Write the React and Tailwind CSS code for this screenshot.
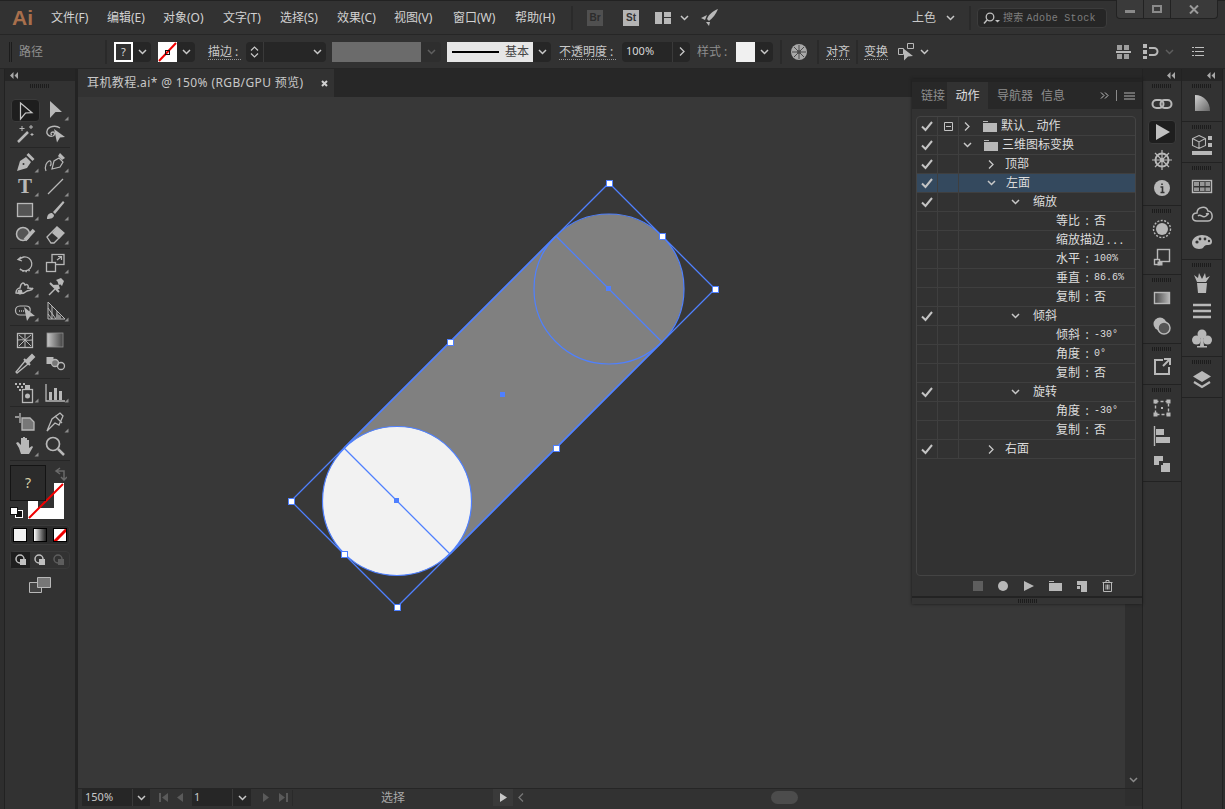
import React from 'react';

const MENU = [
  ['文件(F)', 'w-[56px]'],
  ['编辑(E)', 'w-[56px]'],
  ['对象(O)', 'w-[60px]'],
  ['文字(T)', 'w-[57px]'],
  ['选择(S)', 'w-[57px]'],
  ['效果(C)', 'w-[57px]'],
  ['视图(V)', 'w-[59px]'],
  ['窗口(W)', 'w-[62px]'],
  ['帮助(H)', 'w-[56px]'],
];

const Chev = ({ className = 'text-[#c8c8c8]' }) => (
  <svg width="9" height="6" viewBox="0 0 9 6" className={`shrink-0 ${className}`}>
    <path d="M1 1l3.5 3.5L8 1" fill="none" stroke="currentColor" strokeWidth="1.5" />
  </svg>
);

const ChevRight = ({ className = 'text-[#c8c8c8]' }) => (
  <svg width="6" height="9" viewBox="0 0 6 9" className={`shrink-0 ${className}`}>
    <path d="M1 .5L5 4.5 1 8.5" fill="none" stroke="currentColor" strokeWidth="1.3" />
  </svg>
);

const Drop = ({ w = 'w-[18px]', dim }) => (
  <div className={`${w} h-[20px] shrink-0 flex items-center justify-center bg-[#262626] rounded-r-sm ${dim ? 'opacity-30' : ''}`}>
    <Chev />
  </div>
);

const Sep = ({ className = '' }) => <div className={`w-[2px] h-[24px] shrink-0 bg-[#2a2a2a] ${className}`} />;

const Label = ({ children, className = '', dim }) => (
  <div className={`shrink-0 whitespace-nowrap text-xs leading-[15px] border-b border-dotted border-[#999] ${dim ? 'text-[#9a9a9a]' : 'text-[#c8c8c8]'} ${className}`}>
    {children}
  </div>
);

const Grip = ({ className = 'w-[28px]' }) => (
  <div className={`h-[4px] bg-[repeating-linear-gradient(90deg,#1c1c1c_0,#1c1c1c_1px,transparent_1px,transparent_2px)] ${className}`} />
);

const Collapse = () => (
  <svg width="8" height="7" viewBox="0 0 8 7" className="text-[#a8a8a8]">
    <path d="M3.500 0L0 3.500 3.500 7zM8 0L4.500 3.500 8 7z" fill="currentColor" />
  </svg>
);

// one cell of the tool panel, the flyout triangle sits in the svg
const Tool = ({ children, tri = true }) => (
  <div className="w-[30px] h-[24px] flex items-center justify-center">
    <svg width="24" height="24" viewBox="0 0 24 24" fill="none" stroke="#b8b8b8" strokeWidth="1.3" className="overflow-visible">
      {children}
      {tri && <path d="M25.5 22.5h-4l4-4z" fill="#8c8c8c" stroke="none" />}
    </svg>
  </div>
);

const ToolRow = ({ children }) => <div className="flex pl-[5px] h-[24px]">{children}</div>;
const ToolSep = ({ className = '' }) => <div className={`h-px bg-[#262626] mx-[5px] ${className}`} />;

const DockIcon = ({ children, active }) => (
  <div className="h-[28px] flex items-center justify-center">
    <div className={`w-[28px] h-[24px] flex items-center justify-center rounded-sm ${active ? 'bg-[#1e1e1e] border border-[#3a3a3a]' : ''}`}>
      <svg width="24" height="24" viewBox="0 0 24 24" fill="none" stroke="#b8b8b8" strokeWidth="1.4">{children}</svg>
    </div>
  </div>
);

const DockGroup = ({ children }) => (
  <div className="border-b border-[#222] pb-[3px]">
    <div className="h-[9px] pt-[3px] flex justify-center"><Grip className="w-[20px]" /></div>
    {children}
  </div>
);

const LEFT_DOCK = [
  [
    [<g key="a"><rect x="2.500" y="8" width="11" height="8" rx="4" strokeWidth="2" /><rect x="10.500" y="8" width="11" height="8" rx="4" strokeWidth="2" /></g>],
    [<path key="a" d="M6 4l14 8-14 8z" fill="#c0c0c0" stroke="none" />, true],
    [<g key="a"><circle cx="12" cy="12" r="6.5" strokeWidth="2" /><circle cx="12" cy="12" r="1.5" fill="#b8b8b8" /><path d="M12 2v20M2 12h20M5 5l14 14M19 5L5 19" strokeWidth="1.2" /></g>],
    [<g key="a"><circle cx="12" cy="12" r="8" fill="#b8b8b8" stroke="none" /><path d="M12 7.500v1.600M10.500 11H12.500V16M10.500 16.500h4" stroke="#323232" strokeWidth="1.6" /></g>],
  ],
  [
    [<g key="a"><circle cx="12" cy="12" r="6" fill="#b8b8b8" stroke="none" /><circle cx="12" cy="12" r="8.5" strokeDasharray="2 1.5" /></g>],
    [<g key="a"><rect x="7.500" y="4.500" width="12" height="12" /><rect x="4.500" y="14.500" width="5" height="5" fill="#323232" /><rect x="7.500" y="16.500" width="5" height="4" fill="#b8b8b8" stroke="none" /></g>],
  ],
  [
    [<g key="a"><defs><linearGradient id="dg" x1="0" x2="1"><stop offset="0" stopColor="#444" /><stop offset="1" stopColor="#b8b8b8" /></linearGradient></defs><rect x="4.500" y="6.500" width="15" height="11" fill="url(#dg)" /></g>],
    [<g key="a"><circle cx="10" cy="10" r="6.5" fill="#b8b8b8" stroke="none" /><circle cx="14" cy="14" r="6" fill="#555" stroke="#b8b8b8" strokeWidth="1.5" /></g>],
  ],
  [
    [<path key="a" d="M13 5H5v14h14v-7M14 4h6v6M20 4l-7 7" strokeWidth="2" />],
  ],
  [
    [<g key="a"><rect x="5.500" y="5.500" width="13" height="13" strokeDasharray="3 2" /><path d="M3.500 3.500h4v4h-4zM16.500 3.500h4v4h-4zM3.500 16.500h4v4h-4zM16.500 16.500h4v4h-4z" fill="#b8b8b8" stroke="none" /><rect x="11" y="11" width="2" height="2" fill="#b8b8b8" stroke="none" /></g>],
    [<g key="a"><path d="M4.500 2v20" /><path d="M6 5h8v6H6zM6 13h14v6H6z" fill="#b8b8b8" stroke="none" /></g>],
    [<g key="a"><path d="M4 4h9v5H9v4H4zM11 11h9v9h-9z" fill="#b8b8b8" stroke="none" /><rect x="9" y="9" width="4" height="4" fill="#323232" stroke="none" /></g>],
  ],
];

const RIGHT_DOCK = [
  [
    [<g key="a"><defs><linearGradient id="cg" x1="0" x2="1" y2="1"><stop offset="0" stopColor="#d0d0d0" /><stop offset="1" stopColor="#666" /></linearGradient></defs><path d="M5 3c9 0 15 7 15 16H5z" fill="url(#cg)" stroke="none" /></g>],
  ],
  [
    [<g key="a"><path d="M9 2.500l6.500 3v7l-6.500 3-6.500-3v-7zM2.500 5.500L9 9l6.500-3.500M9 9v6.500" strokeWidth="1.1" /><path d="M18 3h4v4h-4zM18 10h4v4h-4zM2 18h20v4H2z" fill="#b8b8b8" stroke="none" /></g>],
  ],
  [
    [<g key="a"><rect x="2.500" y="6.500" width="19" height="12" /><path d="M4 8h5v4H4zM10 8h4.500v4H10zM15.500 8H20v4h-4.500zM4 13.500h5V17H4zM10 13.500h4.500V17H10zM15.500 13.500H20V17h-4.500z" fill="#b8b8b8" stroke="none" opacity=".75" /></g>],
    [<path key="a" d="M7 19c-6 0-6-8 0-8 0-6 9-8 11-2 5 0 6 10 0 10zM8 14c3-3 4 3 8 0s2-3 0-2" strokeWidth="1.5" />],
    [<g key="a"><path d="M12 5c-6 0-10 4-10 8 0 3 3 6 7 6 6 0 4-4 8-4s5-1 5-4c0-3-5-6-10-6z" fill="#b8b8b8" stroke="none" /><circle cx="7" cy="12" r="1.6" fill="#323232" stroke="none" /><circle cx="10" cy="9" r="1.4" fill="#323232" stroke="none" /><circle cx="15" cy="9" r="1.4" fill="#323232" stroke="none" /><circle cx="19" cy="11" r="1.2" fill="#323232" stroke="none" /></g>],
  ],
  [
    [<path key="a" d="M7 12h10l-1 10H8zM7 11L4 4l4 3 1-5 3 6 3-6 1 5 4-2-4 6z" fill="#b8b8b8" stroke="none" />],
    [<path key="a" d="M3 6h18M3 12h18M3 18h18" strokeWidth="2.5" />],
    [<g key="a"><circle cx="12" cy="7" r="4.500" fill="#b8b8b8" stroke="none" /><circle cx="6.500" cy="13" r="4.500" fill="#b8b8b8" stroke="none" /><circle cx="17.500" cy="13" r="4.500" fill="#b8b8b8" stroke="none" /><path d="M11 10h2l1 9h3v1.500H7V19h3z" fill="#b8b8b8" stroke="none" /></g>],
  ],
  [
    [<g key="a"><path d="M12 3l9 5.500-9 5.500-9-5.500z" fill="#b8b8b8" stroke="none" /><path d="M4 14l8 5 8-5" strokeWidth="2.2" /></g>],
  ],
];

// name, level, flags for the actions list
const ROWS = [
  { t: '默认 _ 动作', lvl: 0, check: true, box: true, closed: true },
  { t: '三维图标变换', lvl: 0, check: true },
  { t: '顶部', lvl: 1, check: true, closed: true },
  { t: '左面', lvl: 1, check: true, hl: true },
  { t: '缩放', lvl: 2, check: true },
  { t: '等比', v: '否', lvl: 3 },
  { t: '缩放描边 . . .', lvl: 3 },
  { t: '水平', v: '100%', lvl: 3 },
  { t: '垂直', v: '86.6%', lvl: 3 },
  { t: '复制', v: '否', lvl: 3 },
  { t: '倾斜', lvl: 2, check: true },
  { t: '倾斜', v: '-30°', lvl: 3 },
  { t: '角度', v: '0°', lvl: 3 },
  { t: '复制', v: '否', lvl: 3 },
  { t: '旋转', lvl: 2, check: true },
  { t: '角度', v: '-30°', lvl: 3 },
  { t: '复制', v: '否', lvl: 3 },
  { t: '右面', lvl: 1, check: true, closed: true },
];

const INDENT = ['pl-[4px]', 'pl-[28px]', 'pl-[52px]', 'pl-[97px]'];

const Folder = () => (
  <svg width="14" height="11" viewBox="0 0 14 11" className="shrink-0 ml-[12px] mr-[4px]">
    <path d="M0 0h5v1H0zM0 2h14v9H0z" fill="#b8b8b8" />
  </svg>
);

const ActionRow = ({ row }) => {
  const open = row.closed ? <ChevRight className="text-[#c8c8c8] mx-[1px]" /> : <Chev />;
  return (
    <div className={`h-[19px] flex border-b border-[#3f3f3f] ${row.hl ? 'bg-[#34495e]' : ''}`}>
      <div className="w-[21px] flex items-center justify-center border-r border-[#3f3f3f]">
        {row.check && (
          <svg width="12" height="11" viewBox="0 0 12 11"><path d="M1 5.500l3.500 3.500L11 1" fill="none" stroke="#c4c4c4" strokeWidth="2" /></svg>
        )}
      </div>
      <div className="w-[21px] flex items-center justify-center border-r border-[#3f3f3f]">
        {row.box && (
          <svg width="9" height="9" viewBox="0 0 9 9"><path d="M.5.500h8v8h-8zM2 4.500h5" fill="none" stroke="#c4c4c4" /></svg>
        )}
      </div>
      <div className={`flex-1 flex items-center text-xs text-[#dcdcdc] whitespace-nowrap ${INDENT[row.lvl]}`}>
        {row.lvl < 3 && open}
        {row.lvl === 0 && <Folder />}
        {row.lvl === 1 && <span className="w-[10px]" />}
        {row.lvl === 2 && <span className="w-[13px]" />}
        <span>{row.t}</span>
        {row.v && (
          <>
            <span className="w-[14px] text-center">:</span>
            <span className={row.v === '否' ? 'text-xs' : "font-['Liberation_Mono','Noto_Sans_CJK_SC',monospace] text-[10px]"}>{row.v}</span>
          </>
        )}
      </div>
    </div>
  );
};

const ActionsPanel = () => (
  <div className="absolute left-[912px] top-[79px] w-[230px] h-[525px] bg-[#323232] border-t-[3px] border-[#232323] flex flex-col shadow-[0_0_3px_#1a1a1a]">
    <div className="h-[27px] bg-[#282828] flex items-stretch text-xs shrink-0">
      <div className="w-[33px] flex items-center justify-end text-[#8e8e8e]">链接</div>
      <div className="ml-[2px] w-[41px] bg-[#323232] flex items-center justify-center text-[#e0e0e0]">动作</div>
      <div className="ml-[9px] w-[36px] flex items-center text-[#8e8e8e] whitespace-nowrap">导航器</div>
      <div className="ml-[8px] w-[26px] flex items-center text-[#8e8e8e]">信息</div>
      <div className="ml-auto flex items-center pr-[7px]">
        <svg width="9" height="7" viewBox="0 0 9 7" className="mr-[7px]"><path d="M1 .5L4 3.500 1 6.500M5 .5L8 3.500 5 6.500" fill="none" stroke="#c0c0c0" /></svg>
        <div className="w-px h-[11px] bg-[#8a8a8a] mr-[7px]" />
        <svg width="11" height="8" viewBox="0 0 11 8"><path d="M0 1h11M0 4h11M0 7h11" stroke="#b0b0b0" /></svg>
      </div>
    </div>
    <div className="mt-[7px] ml-[4px] mr-[6px] h-[460px] border border-[#444] rounded-sm shrink-0">
      {ROWS.map((row, i) => <ActionRow key={i} row={row} />)}
    </div>
    <div className="h-[20px] flex items-center text-[#b8b8b8] pl-[61px] shrink-0">
      <svg width="10" height="10" className="mr-[15px]"><rect width="10" height="10" fill="#5e5e5e" /></svg>
      <svg width="10" height="10" className="mr-[16px]"><circle cx="5" cy="5" r="5" fill="#b8b8b8" /></svg>
      <svg width="10" height="10" className="mr-[15px]"><path d="M0 0l10 5-10 5z" fill="#b8b8b8" /></svg>
      <svg width="13" height="10" className="mr-[14px]"><path d="M0 0h5v1H0zM0 2h13v8H0z" fill="#b8b8b8" /></svg>
      <svg width="11" height="11" className="mr-[15px]"><path d="M1 0h10v11H5V8H1zM1 4v1h3v3h1V4z" fill="#b8b8b8" /></svg>
      <svg width="11" height="12"><path d="M.5 2.500h10M4 2V.5h3V2M1.500 3v8.500h8V3M4 4.500v5M5.500 4.500v5M7 4.500v5" fill="none" stroke="#b8b8b8" /></svg>
    </div>
    <div className="mt-auto h-[8px] border-t-2 border-[#232323] flex justify-center items-center bg-[#343434]">
      <Grip className="w-[19px]" />
    </div>
  </div>
);

const Handle = ({ x, y }) => (
  <rect x={x - 3} y={y - 3} width="6" height="6" fill="#fff" stroke="#4f80ff" strokeWidth="1" shapeRendering="crispEdges" />
);

const Canvas = () => (
  <svg viewBox="78 97 1047 691" className="flex-1 h-full block min-w-0">
    <path d="M556 236L344 448l106 106 212-212z" fill="#808080" />
    <circle cx="609" cy="289" r="75" fill="#808080" stroke="#4f80ff" strokeWidth="1.2" />
    <circle cx="397" cy="501" r="74.500" fill="#f2f2f2" stroke="#4f80ff" strokeWidth="1.200" />
    <path d="M556 236L344 448M662 342L450 554" fill="none" stroke="#4f80ff" strokeWidth="1.500" />
    <path d="M556 236l106 106M344 448l106 106" fill="none" stroke="#4f80ff" strokeWidth="1.300" />
    <path d="M609 183l106 106-318 318-106-106z" fill="none" stroke="#4f80ff" strokeWidth="1.300" />
    {[[609, 183], [662, 236], [715, 289], [556, 448], [397, 607], [344, 554], [291, 501], [450, 342]].map(([x, y]) => (
      <Handle key={`${x}-${y}`} x={x} y={y} />
    ))}
    {[[608, 288], [396, 500], [502, 394]].map(([x, y]) => (
      <rect key={x} x={x - 2} y={y - 2} width="5" height="5" fill="#4f80ff" shapeRendering="crispEdges" />
    ))}
  </svg>
);

const Toolbar = () => (
  <div className="w-[70px] shrink-0 bg-[#323232] flex flex-col">
    <div className="h-[12px] bg-[#262626] flex items-center pl-[5px]"><Collapse /></div>
    <div className="h-[17px] flex justify-center pt-[3px]"><Grip className="w-[20px]" /></div>

    <ToolRow>
      <div className="w-[30px] h-[24px] flex items-center justify-center pt-px">
        <div className="w-[29px] h-[23px] bg-[#1e1e1e] border border-[#3a3a3a] rounded-sm flex items-center justify-center">
          <svg width="24" height="24" viewBox="0 0 24 24"><path d="M7.500 4l11.500 9.700-6.500.3-5 6z" fill="none" stroke="#c8c8c8" strokeWidth="1.200" /></svg>
        </div>
      </div>
      <Tool><path d="M7 3l12 11h-6.500L7 20z" fill="#b8b8b8" stroke="none" /></Tool>
    </ToolRow>
    <ToolRow>
      <Tool tri={false}><path d="M5 20L15 10" strokeWidth="2.500" /><path d="M9 4v5M6.500 6.500h5M18 3v4M16 5h4M19 11v3M17.500 12.500h3" strokeWidth="1" /></Tool>
      <Tool tri={false}><path d="M17 6C13 3 5 4 4 9c-1 4 3 6 6 5 2-1 2-4 0-4s-3 2-1 3" /><path d="M11 7l11 8-5 .5-3 5z" fill="#b8b8b8" stroke="none" /></Tool>
    </ToolRow>
    <ToolSep className="mt-px mb-[2px]" />

    <ToolRow>
      <Tool><path d="M4 21l3-10 6-4 5 5-4 6z" fill="#b8b8b8" stroke="none" /><path d="M13.500 5l2-2 6 6-2 2z" fill="#b8b8b8" stroke="none" /><circle cx="10.500" cy="14" r="1" fill="#323232" stroke="none" /></Tool>
      <Tool><path d="M3 21c-2-5 1-9 3-10s3 3 1 5M9 19l2-8 5-3 4 4-3 5z" strokeWidth="1.200" /><path d="M15 6l2-3 5 5-3 2z" fill="#b8b8b8" stroke="none" /></Tool>
    </ToolRow>
    <ToolRow>
      <Tool><text x="12" y="19" textAnchor="middle" fontFamily="Liberation Serif" fontWeight="700" fontSize="21" fill="#b8b8b8" stroke="none">T</text></Tool>
      <Tool><path d="M5 20L20 5" /></Tool>
    </ToolRow>
    <ToolRow>
      <Tool><rect x="4.500" y="5.500" width="15" height="13" fill="#555" /></Tool>
      <Tool><path d="M4 21c0-4 2-6 5-6l2 2c0 3-3 4-7 4zM10 14L20 3l1.500 1.500L12 16z" fill="#b8b8b8" stroke="none" /></Tool>
    </ToolRow>
    <ToolRow>
      <Tool><circle cx="10" cy="12" r="6.500" fill="#555" strokeWidth="1.500" /><path d="M12 18L21 8" stroke="#b8b8b8" strokeWidth="3.500" /></Tool>
      <Tool><path d="M4 15L14 5l7 6-10 10H8z" fill="#323232" /><path d="M9 11l5-6 7 6-5 6z" fill="#b8b8b8" stroke="none" /></Tool>
    </ToolRow>
    <ToolSep className="my-[2px]" />

    <ToolRow>
      <Tool><path d="M8 6l-3 2.500L9 10" /><path d="M6 9a7 7 0 1 1 1 9" /><path d="M7 18a7 7 0 0 0 10 1" strokeDasharray="1.500 1.500" /></Tool>
      <Tool><rect x="9" y="3.500" width="12" height="10" /><rect x="3.500" y="11.500" width="9" height="9" fill="#323232" /><path d="M14 9l4-3M15 5.500h3.500V9" strokeWidth="1.200" /></Tool>
    </ToolRow>
    <ToolRow>
      <Tool><path d="M3 18c0-3 2-5 4-5 1-6 4-6 5-3 2-1 4 0 3 3 2 0 4 1 5 0-1 3-4 2-6 3-2 2-6 3-11 2z" strokeWidth="1.500" /><circle cx="7" cy="17" r="1.800" fill="#b8b8b8" /></Tool>
      <Tool><path d="M6 20l6-6" strokeWidth="1.500" /><path d="M9 10l5 5 3-1.500L14.500 6.500 13 5l5-2 3 3-2 5-1.500-1.500z" fill="#b8b8b8" stroke="none" /><path d="M7 8l9 9" strokeWidth="2" /></Tool>
    </ToolRow>
    <ToolRow>
      <Tool><path d="M15 16H7c-6 0-6-9 0-9h6c5 0 5 5 3 7" strokeWidth="1.200" /><path d="M6 12h6" strokeDasharray="1 1" /><path d="M11 8l11 9-5 .5-3 4.500z" fill="#b8b8b8" stroke="none" /></Tool>
      <Tool><path d="M5 3v17h17L5 3zM5 9l8 11M5 15l4 5M9 7v13M14 12v8" strokeWidth="1" /><path d="M13 14l5 3v3h-5z" fill="#8a8a8a" stroke="none" /></Tool>
    </ToolRow>
    <ToolSep className="mt-[2px] mb-[2px]" />

    <ToolRow>
      <Tool tri={false}><rect x="4.500" y="5.500" width="15" height="14" /><path d="M12 5v14M5 12c4-1 9 1 14 0M6 7l6 5 6-5M6 18l6-6 6 6" strokeWidth="1" /></Tool>
      <Tool tri={false}><defs><linearGradient id="tg" x1="0" x2="1"><stop offset="0" stopColor="#c8c8c8" /><stop offset="1" stopColor="#444" /></linearGradient></defs><rect x="4" y="5" width="16" height="14" fill="url(#tg)" stroke="#909090" strokeWidth=".8" /></Tool>
    </ToolRow>
    <ToolRow>
      <Tool><path d="M4 21l-1-1 9-11 3 3z" fill="#323232" /><path d="M11 7l6 6M13 9l6-6 2 2-6 6" fill="#b8b8b8" strokeWidth="2" /></Tool>
      <Tool tri={false}><rect x="3.500" y="5" width="7" height="7" fill="#b8b8b8" stroke="none" /><circle cx="12" cy="11" r="3.500" fill="#777" /><circle cx="18" cy="14" r="3.500" /></Tool>
    </ToolRow>
    <ToolSep className="mt-[2px] mb-px" />

    <ToolRow>
      <Tool><path d="M2 4h2M6 4h2M10 4h2M4 7h2M8 7h2M6 10h2" strokeWidth="2" /><rect x="9.500" y="9.500" width="10" height="13" /><circle cx="14.500" cy="16" r="2.500" fill="#b8b8b8" stroke="none" /><rect x="12" y="5" width="5" height="4" fill="#b8b8b8" stroke="none" /></Tool>
      <Tool><path d="M3 4v17h19" /><path d="M6 12h3v8H6zM11 8h3v12h-3zM16 11h3v9h-3z" fill="#b8b8b8" stroke="none" /></Tool>
    </ToolRow>
    <ToolSep className="mt-[2px] mb-[3px]" />

    <ToolRow>
      <Tool tri={false}><path d="M7 3v10M2 7h4" /><path d="M9 8h8l4 4v8H9z" fill="#777" stroke="#b8b8b8" /></Tool>
      <Tool><path d="M4 21l5-12 8-6 3 3-4 9-4-2z" strokeWidth="1.300" /><path d="M12 6l7 7" /></Tool>
    </ToolRow>
    <ToolRow>
      <Tool><path d="M6 14L3 9l2-1 3 3V4h2v6-7h2v7-6h2v6-4h2v8l3-2 1 1-4 7H8z" fill="#b8b8b8" stroke="none" /></Tool>
      <Tool tri={false}><circle cx="10" cy="10" r="6.500" strokeWidth="1.700" /><path d="M15 15l6 6" strokeWidth="2.500" /></Tool>
    </ToolRow>
    <ToolSep className="mt-[2px]" />

    {/* fill and stroke swatches overlap */}
    <div className="relative h-[64px]">
      <div className="absolute left-[5px] top-[4px] w-[36px] h-[36px] bg-[#2b2b2b] border border-[#141414] z-10 flex items-center justify-center text-sm text-[#d8cfa8]">?</div>
      <div className="absolute left-[23px] top-[22px] w-[36px] h-[36px] bg-white">
        <div className="absolute left-[10px] top-0 w-[16px] h-[25px] bg-[#323232]" />
        <svg width="36" height="36" className="absolute inset-0"><path d="M1 35L35 1" stroke="#f00000" strokeWidth="2" /></svg>
      </div>
      <svg width="14" height="14" viewBox="0 0 14 14" className="absolute left-[48px] top-[6px]">
        <path d="M7 1L3 4l4 3M3 4h8v8M8 10l3 3 3-3" fill="none" stroke="#6a6a6a" strokeWidth="1.500" />
      </svg>
      <div className="absolute left-[10px] top-[49px] w-[8px] h-[8px] bg-[#111] border border-white z-10" />
      <div className="absolute left-[5px] top-[46px] w-[8px] h-[8px] bg-white border border-[#111] z-10" />
    </div>

    <div className="mx-[5px] h-[20px] flex gap-[2px] bg-[#2b2b2b] border border-[#3a3a3a] rounded-sm items-center justify-around">
      <div className="w-[14px] h-[14px] bg-[#f2f2f2] border border-black" />
      <div className="w-[14px] h-[14px] bg-linear-to-r from-white to-[#222] border border-black" />
      <div className="w-[14px] h-[14px] bg-white border border-black overflow-hidden">
        <svg width="14" height="14"><path d="M0 13L13 0" stroke="#f00000" strokeWidth="3" /></svg>
      </div>
    </div>
    <div className="mx-[5px] mt-[6px] h-[18px] flex border border-[#3a3a3a] rounded-sm">
      {[true, false, false].map((on, i) => (
        <div key={i} className={`flex-1 flex items-center justify-center ${on ? 'bg-[#1e1e1e]' : ''}`}>
          <svg width="12" height="12" viewBox="0 0 12 12" className={i === 2 ? 'opacity-30' : ''}>
            <circle cx="5" cy="5" r="4" fill="none" stroke="#c0c0c0" strokeWidth="1.500" />
            <rect x="5" y="5" width="6" height="6" fill="#c0c0c0" />
          </svg>
        </div>
      ))}
    </div>
    <div className="mt-[8px] flex justify-center">
      <svg width="22" height="16" viewBox="0 0 22 16">
        <path d="M.5 5.500h12v10H.5z" fill="#444" stroke="#b8b8b8" />
        <path d="M8.500.5h13v10h-13z" fill="#777" stroke="#b8b8b8" />
      </svg>
    </div>
  </div>
);

const ControlBar = () => (
  <div className="h-[35px] shrink-0 border-t border-b border-[#262626] bg-[#323232] flex items-center pl-[9px]">
    <Grip className="w-[3px] !h-[20px]" />
    <div className="ml-[7px] w-[24px] shrink-0 text-xs text-[#8e8e8e] whitespace-nowrap">路径</div>
    <Sep className="ml-[62px]" />
    <div className="ml-[7px] w-[19px] h-[20px] shrink-0 bg-white p-[2px]">
      <div className="w-full h-full bg-[#323232] text-[#dcdcdc] text-[11px] leading-[16px] text-center">?</div>
    </div>
    <Drop />
    <div className="ml-[7px] w-[19px] h-[20px] shrink-0 bg-white">
      <svg width="19" height="20"><path d="M1 19L18 1" stroke="#f00000" strokeWidth="2" /><rect x="7.500" y="8.500" width="4" height="4" fill="none" stroke="#111" /></svg>
    </div>
    <Drop />
    <Label className="ml-[13px] w-[33px]">描边 :</Label>
    <div className="ml-[5px] w-[18px] h-[20px] shrink-0 bg-[#262626] rounded-l-sm flex flex-col items-center justify-center gap-[2px] border-r border-[#3a3a3a]">
      <svg width="9" height="5"><path d="M1 4.500L4.500 1 8 4.500" fill="none" stroke="#c8c8c8" strokeWidth="1.200" /></svg>
      <svg width="9" height="5"><path d="M1 .5L4.500 4 8 .5" fill="none" stroke="#c8c8c8" strokeWidth="1.200" /></svg>
    </div>
    <div className="w-[44px] h-[20px] shrink-0 bg-[#262626]" />
    <Drop />
    <div className="ml-[6px] w-[89px] h-[20px] shrink-0 bg-[#6b6b6b]" />
    <Drop w="w-[20px]" dim />
    <div className="ml-[6px] w-[86px] h-[20px] shrink-0 bg-[#e6e6e6] flex items-center pl-[5px]">
      <div className="w-[47px] h-[2px] bg-black" />
      <span className="ml-[6px] text-xs text-[#444] whitespace-nowrap">基本</span>
    </div>
    <Drop />
    <Label className="ml-[8px] w-[57px]">不透明度 :</Label>
    <div className="ml-[6px] w-[51px] h-[20px] shrink-0 bg-[#262626] rounded-l-sm text-[11px] leading-[18px] pl-[4px] text-[#d8d8d8] border-r border-[#3a3a3a]">100%</div>
    <div className="w-[17px] h-[20px] shrink-0 bg-[#262626] rounded-r-sm flex items-center justify-center"><ChevRight /></div>
    <div className="ml-[7px] w-[31px] shrink-0 text-xs text-[#8e8e8e] whitespace-nowrap">样式 :</div>
    <div className="ml-[8px] w-[19px] h-[20px] shrink-0 bg-[#f0f0f0]" />
    <Drop />
    <Sep className="ml-[7px]" />
    <svg width="16" height="16" viewBox="0 0 16 16" className="ml-[9px] shrink-0">
      <circle cx="8" cy="8" r="8" fill="#a8a8a8" />
      <circle cx="8" cy="8" r="2" fill="#555" />
      <path d="M8 1v14M1 8h14M3 3l10 10M13 3L3 13" stroke="#4a4a4a" />
    </svg>
    <Sep className="ml-[10px]" />
    <Label className="ml-[7px] w-[24px]">对齐</Label>
    <Sep className="ml-[6px]" />
    <Label className="ml-[6px] w-[24px]">变换</Label>
    <svg width="16" height="18" viewBox="0 0 16 18" className="ml-[10px] shrink-0">
      <path d="M.5 5.500h5v6h-5zM9.500.5h6v5h-6z" fill="none" stroke="#b8b8b8" />
      <path d="M6 6l9 7-5 .5-4 4z" fill="#b8b8b8" />
    </svg>
    <div className="ml-[6px]"><Chev /></div>
    <div className="ml-auto flex items-center pr-[21px]">
      <svg width="15" height="14" viewBox="0 0 15 14"><path d="M0 6h15v2H0z" fill="#b8b8b8" /><path d="M1 0h5v5H1zM8 0h5v5H8zM1 9h5v5H1zM8 9h5v5H8z" fill="#b8b8b8" opacity=".8" /></svg>
      <svg width="16" height="15" viewBox="0 0 16 15" className="ml-[12px]"><path d="M0 0h4v4H0zM0 6h4v4H0zM0 12h4v3H0z" fill="#b8b8b8" /><path d="M6 4h5a3.500 3.500 0 0 1 0 7H6" fill="none" stroke="#b8b8b8" strokeWidth="2" /></svg>
      <div className="ml-[6px]"><Chev className="text-[#5e5e5e]" /></div>
      <svg width="12" height="9" viewBox="0 0 12 9" className="ml-[18px]"><path d="M0 0h2v1H0zM3 0h9v1H3zM0 4h2v1H0zM3 4h9v1H3zM0 8h2v1H0zM3 8h9v1H3z" fill="#c0c0c0" /></svg>
    </div>
  </div>
);

const TitleBar = () => (
  <div className="h-[34px] shrink-0 flex items-center bg-[#323232] border-t border-[#222]">
    <div className="ml-[12px] w-[39px] shrink-0 text-[21px] leading-none font-bold text-[#a86f4c] font-['Liberation_Sans',sans-serif]">Ai</div>
    {MENU.map(([name, w]) => (
      <div key={name} className={`${w} shrink-0 text-xs text-[#d2d2d2] whitespace-nowrap`}>{name}</div>
    ))}
    <Sep />
    <div className="ml-[14px] w-[16px] h-[16px] shrink-0 bg-[#505050] text-[#2c2c2c] text-[10px] font-bold leading-[16px] text-center font-['Liberation_Sans',sans-serif]">Br</div>
    <div className="ml-[20px] w-[16px] h-[16px] shrink-0 bg-[#b4b4b4] text-[#333] text-[10px] font-bold leading-[16px] text-center font-['Liberation_Sans',sans-serif]">St</div>
    <svg width="16" height="12" viewBox="0 0 16 12" className="ml-[16px] shrink-0"><path d="M0 0h7v12H0zM9 0h7v5H9zM9 6h7v6H9z" fill="#b8b8b8" /></svg>
    <div className="ml-[9px]"><Chev /></div>
    <svg width="17" height="17" viewBox="0 0 17 17" className="ml-[12px] shrink-0"><path d="M17 0c-2 5-5 9-9 12L6 10c2-5 6-8 11-10zM6 6L0 9l4 2zM9 13l-1 4-3-4z" fill="#b8b8b8" /></svg>
    <div className="ml-[194px] w-[24px] shrink-0 text-xs text-[#c8c8c8] whitespace-nowrap">上色</div>
    <div className="ml-[10px]"><Chev /></div>
    <Sep className="ml-[14px]" />
    <div className="ml-[6px] w-[130px] h-[20px] shrink-0 bg-[#262626] border border-[#3c3c3c] rounded-sm flex items-center pl-[5px]">
      <svg width="17" height="12" viewBox="0 0 17 12"><circle cx="7" cy="5" r="3.800" fill="none" stroke="#c0c0c0" strokeWidth="1.300" /><path d="M4 8l-3 3.500" stroke="#c0c0c0" strokeWidth="1.500" /><path d="M12 8h5l-2.500 2.500z" fill="#c0c0c0" /></svg>
      <span className="ml-[3px] text-[#7e7e7e] text-[10px] whitespace-nowrap tracking-[0.3px]">搜索 <span className="font-['Liberation_Mono',monospace]">Adobe Stock</span></span>
    </div>
    <div className="ml-[9px] self-start flex h-[19px] shrink-0 -mt-px border border-t-0 border-[#222] rounded-b-sm bg-[#3a3a3a]">
      <div className="w-[27px] flex items-center justify-center border-r border-[#222]"><div className="w-[10px] h-[3px] mt-[4px] bg-[#8a8a8a]" /></div>
      <div className="w-[27px] flex items-center justify-center border-r border-[#222]"><div className="w-[10px] h-[8px] border-2 border-[#8a8a8a]" /></div>
      <div className="w-[46px] flex items-center justify-center">
        <svg width="10" height="9" viewBox="0 0 10 9"><path d="M1 .5l8 8M9 .5l-8 8" stroke="#9a9a9a" strokeWidth="2" /></svg>
      </div>
    </div>
  </div>
);

const StatusBar = () => (
  <div className="h-[18px] shrink-0 bg-[#323232] flex items-center text-[11px] text-[#c8c8c8] border-t border-[#262626]">
    <div className="ml-[4px] w-[51px] h-full bg-[#262626] pl-[3px] leading-[16px] border-r border-[#3a3a3a]">150%</div>
    <div className="w-[17px] h-full bg-[#262626] flex items-center justify-center"><Chev /></div>
    <svg width="30" height="9" viewBox="0 0 30 9" className="ml-[9px] shrink-0"><path d="M0 0h2v9H0zM9 0v9L3 4.500zM24 0v9l-6-4.500z" fill="#5a5a5a" /></svg>
    <div className="ml-[3px] w-[41px] h-full bg-[#262626] pl-[2px] leading-[16px] border-r border-[#3a3a3a]">1</div>
    <div className="w-[18px] h-full bg-[#262626] flex items-center justify-center"><Chev /></div>
    <svg width="36" height="9" viewBox="0 0 36 9" className="ml-[5px] shrink-0"><path d="M7 0l6 4.500L7 9zM23 0l6 4.500L23 9zM30 0h2v9h-2z" fill="#5a5a5a" /></svg>
    <div className="w-[201px] text-center text-xs text-[#a8a8a8] border-l border-[#2a2a2a] leading-[16px]">选择</div>
    <div className="w-[20px] h-full bg-[#3a3a3a] flex items-center justify-center"><svg width="7" height="9"><path d="M0 0l7 4.500L0 9z" fill="#c8c8c8" /></svg></div>
    <ChevRight className="text-[#777] rotate-180 ml-[5px]" />
    <div className="flex-1 flex items-center h-full">
      <div className="ml-[247px] w-[27px] h-[13px] rounded-full bg-[#4c4c4c]" />
    </div>
    <div className="w-[17px] h-full bg-[#2e2e2e]" />
  </div>
);

const DockColumn = ({ groups, w, collapseClass }) => (
  <div className={`${w} shrink-0 flex flex-col border-l border-[#222]`}>
    <div className={`h-[12px] bg-[#262626] flex items-center ${collapseClass}`}><Collapse /></div>
    {groups.map((g, i) => (
      <DockGroup key={i}>
        {g.map(([icon, active], j) => <DockIcon key={j} active={active}>{icon}</DockIcon>)}
      </DockGroup>
    ))}
  </div>
);

export default function App() {
  return (
    <div className="relative w-[1225px] h-[809px] overflow-hidden bg-[#323232] flex flex-col [font-family:'Noto_Sans','Noto_Sans_CJK_SC',sans-serif]">
      <TitleBar />
      <ControlBar />
      <div className="flex-1 flex min-h-0">
        <div className="w-[5px] shrink-0 bg-[#2e2e2e] border-r border-[#222]" />
        <Toolbar />
        <div className="w-[3px] shrink-0 bg-[#232323]" />
        <div className="w-[1064px] shrink-0 flex flex-col">
          <div className="h-[28px] shrink-0 bg-[#272727] flex">
            <div className="w-[256px] bg-[#323232] flex items-center pl-[9px] text-xs text-[#c8c8c8] whitespace-nowrap tracking-[0.38px]">
              耳机教程.ai* @ 150% (RGB/GPU 预览)
              <svg width="7" height="7" viewBox="0 0 7 7" className="ml-auto mr-[6px]"><path d="M1 1l5 5M6 1L1 6" stroke="#d0d0d0" strokeWidth="2" /></svg>
            </div>
          </div>
          <div className="h-[691px] shrink-0 flex bg-[#383838]">
            <Canvas />
            <div className="w-[17px] shrink-0 bg-[#2e2e2e] flex flex-col justify-end items-center pb-[5px]">
              <Chev className="text-[#8a8a8a]" />
            </div>
          </div>
          <StatusBar />
        </div>
        <DockColumn groups={LEFT_DOCK} w="w-[39px]" collapseClass="pl-[24px]" />
        <DockColumn groups={RIGHT_DOCK} w="w-[41px]" collapseClass="pl-[25px]" />
        <div className="w-[3px] shrink-0 bg-[#2e2e2e] border-l border-[#222]" />
      </div>
      <ActionsPanel />
    </div>
  );
}
